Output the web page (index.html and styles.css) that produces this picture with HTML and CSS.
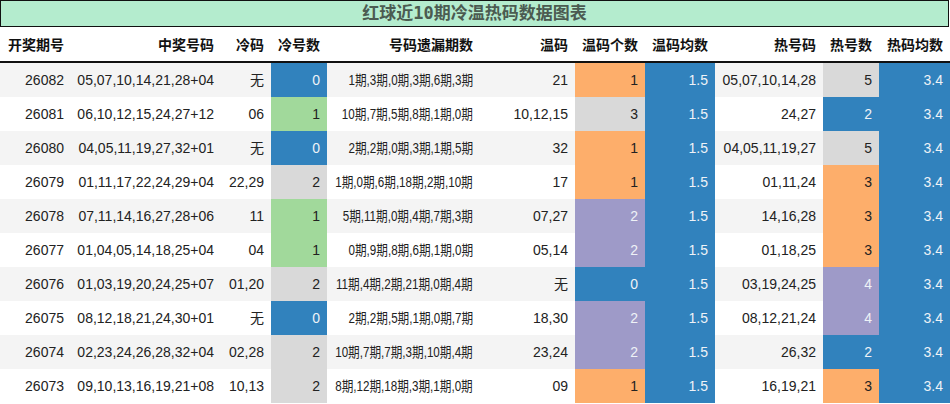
FILE: index.html
```html
<!DOCTYPE html>
<html lang="zh">
<head>
<meta charset="utf-8">
<link rel="stylesheet" href="styles.css">
</head>
<body>
<div class="title">红球近10期冷温热码数据图表</div>
<table class="grid">
<colgroup>
<col class="c1"><col class="c2"><col class="c3"><col class="c4"><col class="c5"><col class="c6"><col class="c7"><col class="c8"><col class="c9"><col class="c10"><col class="c11">
</colgroup>
<thead>
<tr><th>开奖期号</th><th>中奖号码</th><th>冷码</th><th>冷号数</th><th>号码遗漏期数</th><th>温码</th><th>温码个数</th><th>温码均数</th><th>热号码</th><th>热号数</th><th>热码均数</th></tr>
</thead>
<tbody>
<tr><td>26082</td><td>05,07,10,14,21,28+04</td><td>无</td><td class="blue">0</td><td><div class="fit"><span class="miss">1期,3期,0期,3期,6期,3期</span></div></td><td>21</td><td class="orange">1</td><td class="blue">1.5</td><td>05,07,10,14,28</td><td class="gray">5</td><td class="blue">3.4</td></tr>
<tr><td>26081</td><td>06,10,12,15,24,27+12</td><td>06</td><td class="green">1</td><td><div class="fit"><span class="miss">10期,7期,5期,8期,1期,0期</span></div></td><td>10,12,15</td><td class="gray">3</td><td class="blue">1.5</td><td>24,27</td><td class="blue">2</td><td class="blue">3.4</td></tr>
<tr><td>26080</td><td>04,05,11,19,27,32+01</td><td>无</td><td class="blue">0</td><td><div class="fit"><span class="miss">2期,2期,0期,3期,1期,5期</span></div></td><td>32</td><td class="orange">1</td><td class="blue">1.5</td><td>04,05,11,19,27</td><td class="gray">5</td><td class="blue">3.4</td></tr>
<tr><td>26079</td><td>01,11,17,22,24,29+04</td><td>22,29</td><td class="gray">2</td><td><div class="fit"><span class="miss">1期,0期,6期,18期,2期,10期</span></div></td><td>17</td><td class="orange">1</td><td class="blue">1.5</td><td>01,11,24</td><td class="orange">3</td><td class="blue">3.4</td></tr>
<tr><td>26078</td><td>07,11,14,16,27,28+06</td><td>11</td><td class="green">1</td><td><div class="fit"><span class="miss">5期,11期,0期,4期,7期,3期</span></div></td><td>07,27</td><td class="purple">2</td><td class="blue">1.5</td><td>14,16,28</td><td class="orange">3</td><td class="blue">3.4</td></tr>
<tr><td>26077</td><td>01,04,05,14,18,25+04</td><td>04</td><td class="green">1</td><td><div class="fit"><span class="miss">0期,9期,8期,6期,1期,0期</span></div></td><td>05,14</td><td class="purple">2</td><td class="blue">1.5</td><td>01,18,25</td><td class="orange">3</td><td class="blue">3.4</td></tr>
<tr><td>26076</td><td>01,03,19,20,24,25+07</td><td>01,20</td><td class="gray">2</td><td><div class="fit"><span class="miss">11期,4期,2期,21期,0期,4期</span></div></td><td>无</td><td class="blue">0</td><td class="blue">1.5</td><td>03,19,24,25</td><td class="purple">4</td><td class="blue">3.4</td></tr>
<tr><td>26075</td><td>08,12,18,21,24,30+01</td><td>无</td><td class="blue">0</td><td><div class="fit"><span class="miss">2期,2期,5期,1期,0期,7期</span></div></td><td>18,30</td><td class="purple">2</td><td class="blue">1.5</td><td>08,12,21,24</td><td class="purple">4</td><td class="blue">3.4</td></tr>
<tr><td>26074</td><td>02,23,24,26,28,32+04</td><td>02,28</td><td class="gray">2</td><td><div class="fit"><span class="miss">10期,7期,7期,3期,10期,4期</span></div></td><td>23,24</td><td class="purple">2</td><td class="blue">1.5</td><td>26,32</td><td class="blue">2</td><td class="blue">3.4</td></tr>
<tr><td>26073</td><td>09,10,13,16,19,21+08</td><td>10,13</td><td class="gray">2</td><td><div class="fit"><span class="miss">8期,12期,18期,3期,1期,0期</span></div></td><td>09</td><td class="orange">1</td><td class="blue">1.5</td><td>16,19,21</td><td class="orange">3</td><td class="blue">3.4</td></tr>
</tbody>
</table>
</body>
</html>
```
FILE: styles.css
```css
html, body {
  margin: 0;
  padding: 0;
  background: #ffffff;
}
.title {
  box-sizing: border-box;
  width: 949px;
  height: 27px;
  border: 1px solid #111;
  background: #b4ecce;
  color: #4b5b51;
  font-family: "DejaVu Sans Mono", "Noto Sans CJK SC", monospace;
  font-weight: bold;
  font-size: 17px;
  line-height: 24px;
  text-align: center;
}
.grid {
  width: 950px;
  table-layout: fixed;
  border-collapse: collapse;
  font-family: "Liberation Sans", "Noto Sans CJK SC", sans-serif;
  font-size: 14px;
  color: #222;
}
.c1 { width: 71px; }
.c2 { width: 150px; }
.c3 { width: 50px; }
.c4 { width: 56px; }
.c5 { width: 153px; }
.c6 { width: 95px; }
.c7 { width: 70px; }
.c8 { width: 70px; }
.c9 { width: 108px; }
.c10 { width: 56px; }
.c11 { width: 71px; }
.grid th,
.grid td {
  padding: 0 7px 0 0;
  text-align: right;
  white-space: nowrap;
  overflow: visible;
}
.grid th {
  height: 34px;
  font-family: "Noto Sans CJK SC", sans-serif;
  font-weight: bold;
  font-size: 14px;
  color: #111;
  border-bottom: 2px solid #111;
}
.grid td {
  height: 34px;
  line-height: 34px;
}
.fit {
  display: flex;
  justify-content: flex-end;
}
.miss {
  flex-shrink: 0;
  transform: scaleX(0.83);
  transform-origin: right center;
}
.grid tbody tr:nth-child(odd) td {
  background: #f4f4f4;
}
.grid tbody tr td.blue { background: #3182bd; color: #eef2f7; }
.grid tbody tr td.green { background: #a1d99b; color: #222; }
.grid tbody tr td.gray { background: #d9d9d9; color: #222; }
.grid tbody tr td.orange { background: #fdae6b; color: #222; }
.grid tbody tr td.purple { background: #9e9ac8; color: #eef2f7; }
```
